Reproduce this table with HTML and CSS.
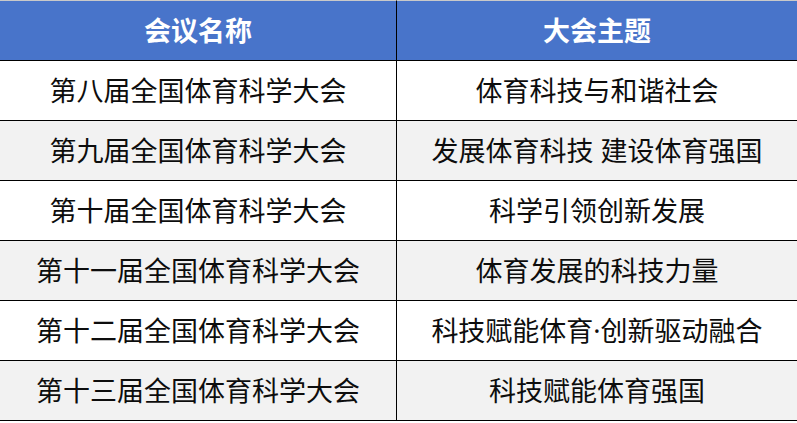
FILE: index.html
```html
<!DOCTYPE html>
<html lang="zh-CN">
<head>
<meta charset="utf-8">
<title>全国体育科学大会</title>
<link rel="stylesheet" href="styles.css">
</head>
<body>
<div class="table">
  <div class="cell head left">会议名称</div>
  <div class="cell head right">大会主题</div>

  <div class="cell left">第八届全国体育科学大会</div>
  <div class="cell right">体育科技与和谐社会</div>

  <div class="cell left alt">第九届全国体育科学大会</div>
  <div class="cell right alt">发展体育科技 建设体育强国</div>

  <div class="cell left">第十届全国体育科学大会</div>
  <div class="cell right">科学引领创新发展</div>

  <div class="cell left alt">第十一届全国体育科学大会</div>
  <div class="cell right alt">体育发展的科技力量</div>

  <div class="cell left">第十二届全国体育科学大会</div>
  <div class="cell right">科技赋能体育·创新驱动融合</div>

  <div class="cell left alt">第十三届全国体育科学大会</div>
  <div class="cell right alt">科技赋能体育强国</div>
</div>
</body>
</html>
```

FILE: styles.css
```css
html, body {
  margin: 0;
  padding: 0;
  background: #ffffff;
}

body {
  font-family: "Noto Sans", "Noto Sans CJK SC", sans-serif;
  width: 797px;
  height: 423px;
  overflow: hidden;
}

.table {
  display: grid;
  grid-template-columns: 397px 400px;
}

.cell {
  box-sizing: border-box;
  height: 60px;
  display: flex;
  align-items: center;
  justify-content: center;
  font-size: 27px;
  line-height: 1;
  color: #0d0d0d;
  background: #ffffff;
  border-bottom: 1px solid #000000;
  white-space: nowrap;
}

.left {
  border-right: 1px solid #000000;
}

.alt {
  background: #f2f2f2;
}

.head {
  height: 61px;
  border-top: 1px solid #c9c9c9;
  background: #4874ca;
  color: #ffffff;
  font-weight: 700;
  font-size: 27px;
}
```
